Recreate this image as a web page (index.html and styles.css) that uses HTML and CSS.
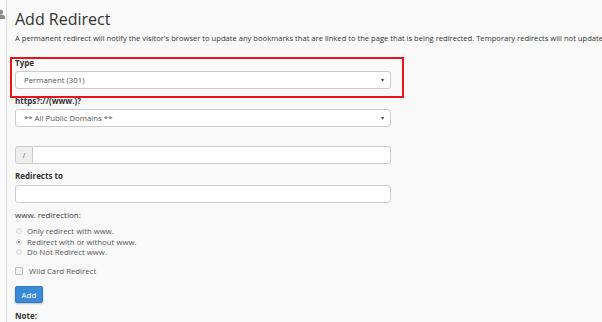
FILE: index.html
```html
<!DOCTYPE html>
<html lang="en">
<head>
    <meta charset="UTF-8">
    <title>Add Redirect</title>
    <link rel="stylesheet" href="styles.css">
</head>
<body>
    <div class="layout">
        <aside class="sidebar">
            <svg class="user-icon" width="10" height="10" viewBox="0 0 10 10">
                <circle cx="5" cy="3" r="2.2" fill="#8a8a8a"/>
                <path d="M0.8 10 C0.8 6.6 2.6 5.6 5 5.6 C7.4 5.6 9.2 6.6 9.2 10 Z" fill="#8a8a8a"/>
            </svg>
        </aside>

        <main class="content">
            <h1 class="title">Add Redirect</h1>
            <p class="intro">A permanent redirect will notify the visitor's browser to update any bookmarks that are linked to the page that is being redirected. Temporary redirects will not update the visitor's bookmarks.</p>

            <div class="field highlight">
                <label class="label">Type</label>
                <div class="select">
                    <span>Permanent (301)</span>
                    <span class="caret">&#9662;</span>
                </div>
            </div>

            <div class="field domain">
                <label class="label">https?://(www.)?</label>
                <div class="select">
                    <span>** All Public Domains **</span>
                    <span class="caret">&#9662;</span>
                </div>
            </div>

            <div class="field">
                <div class="input-group">
                    <span class="addon">/</span>
                    <span class="input-box"></span>
                </div>
            </div>

            <div class="field target">
                <label class="label">Redirects to</label>
                <div class="input"></div>
            </div>

            <div class="field www">
                <p class="group-title">www. redirection:</p>
                <div class="radio"><span class="dot"></span>Only redirect with www.</div>
                <div class="radio"><span class="dot checked"></span>Redirect with or without www.</div>
                <div class="radio"><span class="dot"></span>Do Not Redirect www.</div>
            </div>

            <div class="check"><span class="box"></span>Wild Card Redirect</div>

            <button class="btn">Add</button>

            <p class="note">Note:</p>
        </main>
    </div>
</body>
</html>
```

FILE: styles.css
```css
body {
    margin: 0;
    padding: 0;
    font-family: "Open Sans", "Liberation Sans", sans-serif;
    font-size: 7.8px;
    color: #333;
    background-color: #f9f9f9;
    overflow: hidden;
}

.layout {
    display: flex;
    height: 322px;
}

/* left strip of the side menu */
.sidebar {
    width: 6px;
    flex-shrink: 0;
    background-color: #fbfbfb;
    border-right: 1px solid #dcdcdc;
    overflow: hidden;
}

.user-icon {
    display: block;
    margin: 9px 0 0 -4px;
}

.content {
    flex: 1;
    padding: 7px 0 0 8px;
    min-width: 0;
    overflow: hidden;
}

.title {
    margin: 0;
    font-size: 16px;
    font-weight: 400;
    line-height: 24px;
    color: #333;
}

.intro {
    margin: 1px 0 0;
    font-size: 7.6px;
    line-height: 12px;
    white-space: nowrap;
    overflow: hidden;
}

.field {
    width: 376px;
}

.highlight {
    position: relative;
    margin-top: 13px;
}

.highlight::before {
    content: "";
    position: absolute;
    left: -5px;
    right: -13px;
    top: 0;
    bottom: -9px;
    border: 2px solid #e8141c;
}

.label {
    display: block;
    font-weight: 700;
    font-size: 8px;
    line-height: 12px;
    margin-bottom: 3px;
}

.highlight .label {
    margin-top: 1px;
    margin-bottom: 2px;
}

.select {
    display: flex;
    justify-content: space-between;
    align-items: center;
    height: 16px;
    padding: 0 6px 0 8px;
    background-color: #fff;
    border: 1px solid #ccc;
    border-radius: 3px;
    color: #555;
}

.caret {
    font-size: 6px;
    color: #444;
}

.domain {
    margin-top: 6px;
}

.domain .label {
    margin-bottom: 2px;
}

.input-group {
    display: flex;
    height: 18px;
    margin-top: 19px;
}

.addon {
    width: 16px;
    display: flex;
    align-items: center;
    justify-content: center;
    background-color: #eee;
    border: 1px solid #ccc;
    border-radius: 3px 0 0 3px;
    color: #555;
    font-size: 7px;
}

.input-box {
    flex: 1;
    background-color: #fff;
    border: 1px solid #ccc;
    border-left: none;
    border-radius: 0 3px 3px 0;
}

.target {
    margin-top: 6px;
}

.input {
    height: 16px;
    background-color: #fff;
    border: 1px solid #ccc;
    border-radius: 3px;
}

.www {
    margin-top: 6px;
}

.group-title {
    margin: 0 0 5px;
    font-size: 8px;
    line-height: 12px;
}

.radio {
    display: flex;
    align-items: center;
    line-height: 10.5px;
    color: #555;
}

.dot {
    width: 6px;
    height: 6px;
    margin: 0 5px 0 1px;
    border: 1px solid #d6d6d6;
    border-radius: 50%;
    background-color: #f4f4f4;
    box-sizing: border-box;
}

.dot.checked {
    background: radial-gradient(circle, #888 0 1.2px, #f4f4f4 1.5px);
}

.check {
    display: flex;
    align-items: center;
    margin-top: 7px;
    color: #555;
    line-height: 12px;
}

.box {
    width: 6px;
    height: 6px;
    margin-right: 6px;
    border: 1px solid #bbb;
    border-radius: 1px;
    background-color: #f2f2f2;
}

.btn {
    display: block;
    margin-top: 9px;
    width: 28px;
    height: 17px;
    padding: 0;
    font-family: inherit;
    font-size: 8px;
    color: #fff;
    background-color: #3a8ad6;
    border: 1px solid #2f7cc4;
    border-radius: 2px;
    box-shadow: 0 1px 2px rgba(0, 0, 0, 0.25);
}

.note {
    margin: 7px 0 0;
    font-weight: 700;
    font-size: 8px;
    line-height: 12px;
}
```
